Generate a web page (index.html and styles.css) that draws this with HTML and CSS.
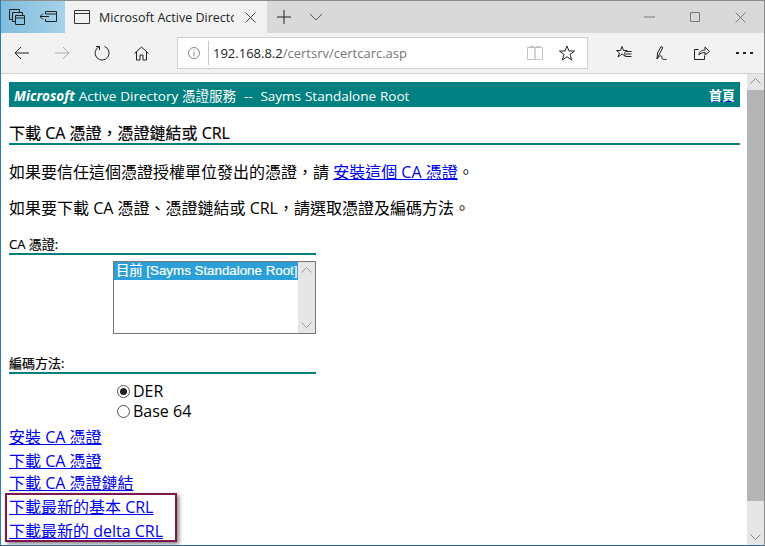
FILE: index.html
```html
<!DOCTYPE html>
<html lang="zh-Hant">
<head>
    <meta charset="UTF-8">
    <title>Microsoft Active Directory 憑證服務</title>
    <link rel="stylesheet" href="styles.css">
</head>
<body>
    <div class="window">
        <!-- tab strip -->
        <div class="tabbar">
            <div class="tab-tools">
                <svg class="icon" width="16" height="16" viewBox="0 0 16 16"><path d="M.5.500h10v3M.5.500v10h3M3.500 3.500h10v2.500M3.500 3.500v9h2.500M6.500 6.500h9v9h-9zM6.500 9h9" fill="none" stroke="#222"/></svg>
                <svg class="icon" width="17" height="12" viewBox="0 0 17 12"><path d="M5.500 3V.500h11v10h-11V8M5.500 3h11M0 5.500h9M3 2.500L0 5.500l3 3" fill="none" stroke="#222"/></svg>
            </div>
            <div class="tab">
                <svg class="tab-page" width="16" height="14" viewBox="0 0 16 14"><path d="M.5.500h15v13H.5zM.5 3.500h15" fill="none" stroke="#333"/></svg>
                <span class="tab-title">Microsoft Active Directory</span>
                <svg class="tab-close" width="11" height="11" viewBox="0 0 11 11"><path d="M.5.500l10 10M10.500.500l-10 10" stroke="#444" fill="none"/></svg>
            </div>
            <div class="tab-new">
                <svg width="14" height="14" viewBox="0 0 14 14"><path d="M7 0v14M0 7h14" stroke="#222" fill="none"/></svg>
                <svg width="14" height="8" viewBox="0 0 14 8"><path d="M1 1l6 6 6-6" stroke="#555" fill="none"/></svg>
            </div>
            <div class="window-btns">
                <svg width="11" height="2" viewBox="0 0 11 2"><path d="M0 1h11" stroke="#777"/></svg>
                <svg width="10" height="10" viewBox="0 0 10 10"><path d="M.5.500h9v9h-9z" stroke="#777" fill="none"/></svg>
                <svg width="11" height="11" viewBox="0 0 11 11"><path d="M.5.500l10 10M10.500.500l-10 10" stroke="#777" fill="none"/></svg>
            </div>
        </div>

        <!-- address bar -->
        <div class="toolbar">
            <div class="nav">
                <svg width="16" height="14" viewBox="0 0 16 14"><path d="M15 7H1M7 1L1 7l6 6" stroke="#222" fill="none"/></svg>
                <svg width="16" height="14" viewBox="0 0 16 14"><path d="M1 7h14M9 1l6 6-6 6" stroke="#aaa" fill="none"/></svg>
                <svg width="16" height="16" viewBox="0 0 16 16"><path d="M5 1.800A7 7 0 1 0 10.500 1.500M5.500 1.500V5M5.500 1.500L2 1.500" stroke="#222" fill="none"/></svg>
                <svg width="15" height="15" viewBox="0 0 15 15"><path d="M.5 7.500l7-6.500 7 6.500M2.500 6v8h3.500v-5h3v5h3.500V6" stroke="#222" fill="none"/></svg>
            </div>
            <div class="address">
                <svg class="info" width="14" height="14" viewBox="0 0 14 14"><circle cx="7" cy="7" r="5.500" stroke="#888" fill="none"/><path d="M7 6v4.500M7 3.500v1.200" stroke="#888"/></svg>
                <span class="url"><span class="host">192.168.8.2</span>/certsrv/certcarc.asp</span>
                <svg class="reader" width="16" height="14" viewBox="0 0 16 14"><path d="M.5 1.500h7.500v12H.5zM8 1.500h7.500v12H8zM2.500 1.500V.500h4l1.500 1M13.500 1.500V.500h-4L8 1.500" stroke="#c4c4c4" fill="none"/></svg>
                <svg class="star" width="16" height="16" viewBox="0 0 16 16"><path d="M8 1l2 5h5.500l-4.500 3.500 1.800 5.500L8 11.800 3.200 15 5 9.500.500 6H6z" stroke="#222" fill="none"/></svg>
            </div>
            <div class="actions">
                <svg width="16" height="16" viewBox="0 0 16 16"><path d="M6 1.500L7.500 5.500H11L8.500 8l1 3.500-3.500-2.500-4 3 1.500-4L.500 5.500h4zM10 6.500h5.500M10 9h5.500M10 11.500h5.500" stroke="#222" fill="none"/></svg>
                <svg width="16" height="16" viewBox="0 0 16 16"><path d="M2 14l.5-6 3.500-6.500 1.800 1L4.500 9 2 14c1-2 3.500-4 4.500-3s0 2.500 1 3 2.500.500 4 .500" stroke="#222" fill="none"/></svg>
                <svg width="16" height="16" viewBox="0 0 16 16"><path d="M4.500 4.500h-4v10h10v-4M5 10c0-3 2.500-5 6-5V2l4.500 4.500L11 10V7.500c-3 0-5 1-6 2.500z" stroke="#222" fill="none"/></svg>
                <span class="more"><i></i><i></i><i></i></span>
            </div>
        </div>

        <div class="viewport">
            <div class="page">
                <div class="banner">
                    <span><b class="ms">Microsoft</b> Active Directory 憑證服務 &nbsp;--&nbsp; Sayms Standalone Root</span>
                    <a class="home" href="#">首頁</a>
                </div>

                <h1 class="page-title">下載 CA 憑證，憑證鏈結或 CRL</h1>
                <p class="line first">如果要信任這個憑證授權單位發出的憑證，請 <a href="#">安裝這個 CA 憑證</a>。</p>
                <p class="line second">如果要下載 CA 憑證、憑證鏈結或 CRL，請選取憑證及編碼方法。</p>

                <div class="section-label label-ca">CA 憑證:</div>
                <div class="cert-list">
                    <div class="cert-items">
                        <div class="cert-selected">目前 [Sayms Standalone Root]</div>
                    </div>
                    <div class="cert-scroll">
                        <svg width="11" height="6" viewBox="0 0 11 6"><path d="M.5 5.500l5-5 5 5" stroke="#9a9a9a" fill="none"/></svg>
                        <svg width="11" height="6" viewBox="0 0 11 6"><path d="M.5.500l5 5 5-5" stroke="#9a9a9a" fill="none"/></svg>
                    </div>
                </div>

                <div class="section-label label-enc">編碼方法:</div>
                <div class="encodings">
                    <label class="radio"><span class="dot on"></span>DER</label>
                    <label class="radio"><span class="dot"></span>Base 64</label>
                </div>

                <div class="links">
                    <a href="#">安裝 CA 憑證</a>
                    <a href="#">下載 CA 憑證</a>
                    <a class="tight" href="#">下載 CA 憑證鏈結</a>
                </div>
                <div class="links marked">
                    <a href="#">下載最新的基本 CRL</a>
                    <a href="#">下載最新的 delta CRL</a>
                </div>
            </div>

            <div class="scrollbar">
                <svg width="11" height="6" viewBox="0 0 11 6"><path d="M.5 5.500l5-5 5 5" stroke="#8a8a8a" fill="none"/></svg>
                <div class="thumb"></div>
                <svg width="11" height="6" viewBox="0 0 11 6"><path d="M.5.500l5 5 5-5" stroke="#8a8a8a" fill="none"/></svg>
            </div>
        </div>
    </div>
</body>
</html>
```

FILE: styles.css
```css
* {
    box-sizing: border-box;
}
html, body {
    margin: 0;
    height: 100%;
    overflow: hidden;
}
body {
    font-family: "Open Sans", "Noto Sans CJK TC", sans-serif;
    color: #000;
    background-color: #fff;
}
a {
    color: #0000ee;
}
svg {
    display: block;
    flex: none;
}
.window {
    width: 765px;
    height: 546px;
    display: flex;
    flex-direction: column;
    border-left: 1px solid #2a7fb0;
    border-right: 1px solid #8a8a8a;
    border-bottom: 1px solid #2a6a9c;
}

/* tab strip */
.tabbar {
    height: 33px;
    display: flex;
    background-color: #d9d9d9;
    border-top: 1px solid #8c8c8c;
}
.tab-tools {
    width: 64px;
    display: flex;
    align-items: center;
    gap: 15px;
    padding: 0 0 0 8px;
    background: linear-gradient(90deg, #7fbcdc, #a6d2e8);
}
.tab {
    width: 202px;
    display: flex;
    align-items: center;
    padding: 0 11px 0 9px;
    background-color: #f2f2f2;
}
.tab-title {
    width: 135px;
    margin-left: 9px;
    font-size: 12.5px;
    color: #222;
    white-space: nowrap;
    overflow: hidden;
}
.tab-close {
    margin-left: 11px;
}
.tab-new {
    width: 62px;
    display: flex;
    align-items: center;
    gap: 18px;
    padding-left: 10px;
}
.window-btns {
    margin-left: auto;
    display: flex;
    align-items: center;
    gap: 35px;
    padding-right: 18px;
}

/* address bar */
.toolbar {
    height: 41px;
    display: flex;
    align-items: center;
    background-color: #f2f2f2;
    border-bottom: 1px solid #cfcfcf;
}
.nav {
    width: 176px;
    display: flex;
    align-items: center;
    gap: 24px;
    padding-left: 13px;
}
.address {
    width: 411px;
    height: 32px;
    display: flex;
    align-items: center;
    background-color: #fff;
    border: 1px solid #cfcfcf;
}
.info {
    margin-left: 9px;
}
.url {
    margin-left: 7px;
    padding-left: 4px;
    width: 291px;
    line-height: 24px;
    border-left: 1px solid #c8c8c8;
    font-size: 13px;
    color: #767676;
}
.host {
    color: #222;
}
.reader {
    margin-left: 28px;
}
.star {
    margin-left: 16px;
}
.actions {
    display: flex;
    align-items: center;
    gap: 23px;
    padding-left: 28px;
}
.more {
    display: flex;
    gap: 4px;
    margin-left: 3px;
}
.more i {
    width: 3px;
    height: 2px;
    background-color: #222;
}

/* page area */
.viewport {
    flex: 1;
    min-height: 0;
    display: flex;
    background-color: #fff;
}
.page {
    width: 747px;
    padding: 8px 7px 0 8px;
    overflow: hidden;
}
.banner {
    height: 25px;
    display: flex;
    justify-content: space-between;
    align-items: center;
    padding: 0 5px;
    background-color: #008080;
    color: #fff;
    font-size: 13.5px;
    word-spacing: 0.4px;
}
.ms {
    font-style: italic;
    font-weight: 700;
}
.banner .home {
    color: #fff;
    font-size: 13px;
    font-weight: 700;
    text-decoration-color: #0000ee;
}
.page-title {
    margin: 16px 0 0;
    height: 22px;
    line-height: 20px;
    font-size: 16px;
    font-weight: 400;
    -webkit-text-stroke: 0.2px #000;
    border-bottom: 2px solid #008080;
}
.line {
    margin: 0;
    font-size: 16px;
    line-height: 22px;
}
.first {
    margin-top: 16px;
}
.second {
    margin-top: 14px;
}
.section-label {
    width: 307px;
    height: 19px;
    font-size: 13px;
    line-height: 16px;
    -webkit-text-stroke: 0.2px #000;
    border-bottom: 2px solid #008080;
}
.label-ca {
    margin-top: 17px;
}
.label-enc {
    margin-top: 21px;
}
.cert-list {
    width: 203px;
    height: 73px;
    margin: 6px 0 0 104px;
    display: flex;
    border: 1px solid #767676;
}
.cert-items {
    flex: 1;
}
.cert-selected {
    height: 18px;
    line-height: 18px;
    padding-left: 2px;
    background-color: #2a9fd8;
    color: #fff;
    font-family: "Liberation Sans", "Noto Sans CJK TC", sans-serif;
    font-size: 13.33px;
    -webkit-text-stroke: 0.2px #fff;
    white-space: nowrap;
}
.cert-scroll {
    width: 17px;
    display: flex;
    flex-direction: column;
    justify-content: space-between;
    align-items: center;
    padding: 5px 0;
    background-color: #e6e6e6;
}
.encodings {
    margin: 7px 0 0 108px;
}
.radio {
    display: flex;
    align-items: center;
    height: 20px;
    font-size: 16px;
}
.dot {
    width: 13px;
    height: 13px;
    margin-right: 3px;
    border: 1px solid #555;
    border-radius: 50%;
    background-color: #fff;
}
.dot.on {
    padding: 2px;
    background-clip: content-box;
    background-color: #222;
}
.links {
    display: flex;
    flex-direction: column;
    align-items: flex-start;
    gap: 2px;
    font-size: 16px;
    line-height: 22px;
}
.links:not(.marked) {
    margin-top: 5px;
}
.links .tight {
    margin-top: -2px;
}
.marked {
    width: 172px;
    height: 49px;
    margin: -1px 0 0 -4px;
    padding: 1px 2px 0;
    border: 2px solid #7b1a4e;
    box-shadow: 2px 2px 4px rgba(0, 0, 0, 0.5);
}

/* page scrollbar */
.scrollbar {
    width: 17px;
    display: flex;
    flex-direction: column;
    align-items: center;
    padding: 4px 0 5px;
    background-color: #e6e6e6;
}
.thumb {
    width: 100%;
    height: 411px;
    margin: 6px 0 auto;
    background-color: #b4b4b4;
}
```
